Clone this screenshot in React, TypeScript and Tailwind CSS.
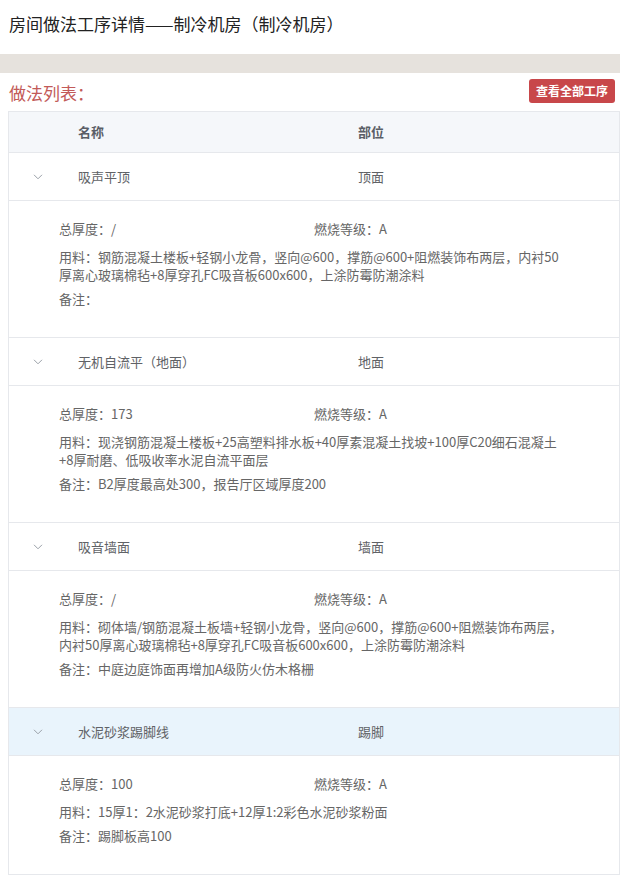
import React from "react";

type Item = {
  name: string;
  part: string;
  thickness: string;
  fire: string;
  material: string[];
  note: string;
  active?: boolean;
};

const items: Item[] = [
  {
    name: "吸声平顶",
    part: "顶面",
    thickness: "/",
    fire: "A",
    material: [
      "用料：钢筋混凝土楼板+轻钢小龙骨，竖向@600，撑筋@600+阻燃装饰布两层，内衬50",
      "厚离心玻璃棉毡+8厚穿孔FC吸音板600x600，上涂防霉防潮涂料",
    ],
    note: "",
  },
  {
    name: "无机自流平（地面）",
    part: "地面",
    thickness: "173",
    fire: "A",
    material: [
      "用料：现浇钢筋混凝土楼板+25高塑料排水板+40厚素混凝土找坡+100厚C20细石混凝土",
      "+8厚耐磨、低吸收率水泥自流平面层",
    ],
    note: "B2厚度最高处300，报告厅区域厚度200",
  },
  {
    name: "吸音墙面",
    part: "墙面",
    thickness: "/",
    fire: "A",
    material: [
      "用料：砌体墙/钢筋混凝土板墙+轻钢小龙骨，竖向@600，撑筋@600+阻燃装饰布两层，",
      "内衬50厚离心玻璃棉毡+8厚穿孔FC吸音板600x600，上涂防霉防潮涂料",
    ],
    note: "中庭边庭饰面再增加A级防火仿木格栅",
  },
  {
    name: "水泥砂浆踢脚线",
    part: "踢脚",
    thickness: "100",
    fire: "A",
    material: ["用料：15厚1：2水泥砂浆打底+12厚1:2彩色水泥砂浆粉面"],
    note: "踢脚板高100",
    active: true,
  },
];

function Chevron() {
  return (
    <svg width="10" height="6" viewBox="0 0 10 6" fill="none">
      <path d="M1 0.8L5 4.8L9 0.8" stroke="#9aa0a8" strokeWidth="1" />
    </svg>
  );
}

export default function App() {
  return (
    <div
      className="w-[620px] bg-white text-[#333]"
      style={{ fontFamily: '"Noto Sans CJK SC", "Noto Sans", sans-serif' }}
    >
      <div className="h-[54px] pl-[9px] pt-[12px] text-[17px] leading-[24px] text-[#222]">
        房间做法工序详情——制冷机房（制冷机房）
      </div>
      <div className="h-[19px] bg-[#e6e2dd]" />
      <div className="flex h-[38px] items-center justify-between pl-[9px] pr-[5px]">
        <div className="pt-[2px] text-[17px] text-[#c25a58]">做法列表：</div>
        <button className="mt-[-2px] flex h-[24px] items-center rounded-[3px] bg-[#c8474a] px-[7px] text-[12px] font-bold text-white">
          查看全部工序
        </button>
      </div>
      <div className="ml-[8px] border border-b-0 border-[#e6e8ec]">
        <div className="flex h-[41px] items-center border-b border-[#e6e8ec] bg-[#f5f7fa] text-[13px] font-bold text-[#5a5e66]">
          <div className="w-[69px]" />
          <div className="w-[280px]">名称</div>
          <div>部位</div>
        </div>
        {items.map((it) => (
          <div key={it.name}>
            <div
              className={
                "flex h-[48px] items-center border-b border-[#e6e8ec] text-[13px] text-[#606266] " +
                (it.active ? "bg-[#e9f4fc]" : "bg-white")
              }
            >
              <div className="flex w-[69px] justify-start pl-[24px]">
                <Chevron />
              </div>
              <div className="w-[280px]">{it.name}</div>
              <div>{it.part}</div>
            </div>
            <div className="border-b border-[#e6e8ec] pb-[29px] pl-[50px] pt-[19px] text-[13px] leading-[18px] text-[#666]">
              <div className="mb-[10px] flex">
                <div className="w-[255px]">总厚度：{it.thickness}</div>
                <div>燃烧等级：{it.fire}</div>
              </div>
              <div className="mb-[6px] whitespace-nowrap">
                {it.material.map((l, i) => (
                  <div key={i}>{l}</div>
                ))}
              </div>
              <div>备注：{it.note}</div>
            </div>
          </div>
        ))}
      </div>
    </div>
  );
}
